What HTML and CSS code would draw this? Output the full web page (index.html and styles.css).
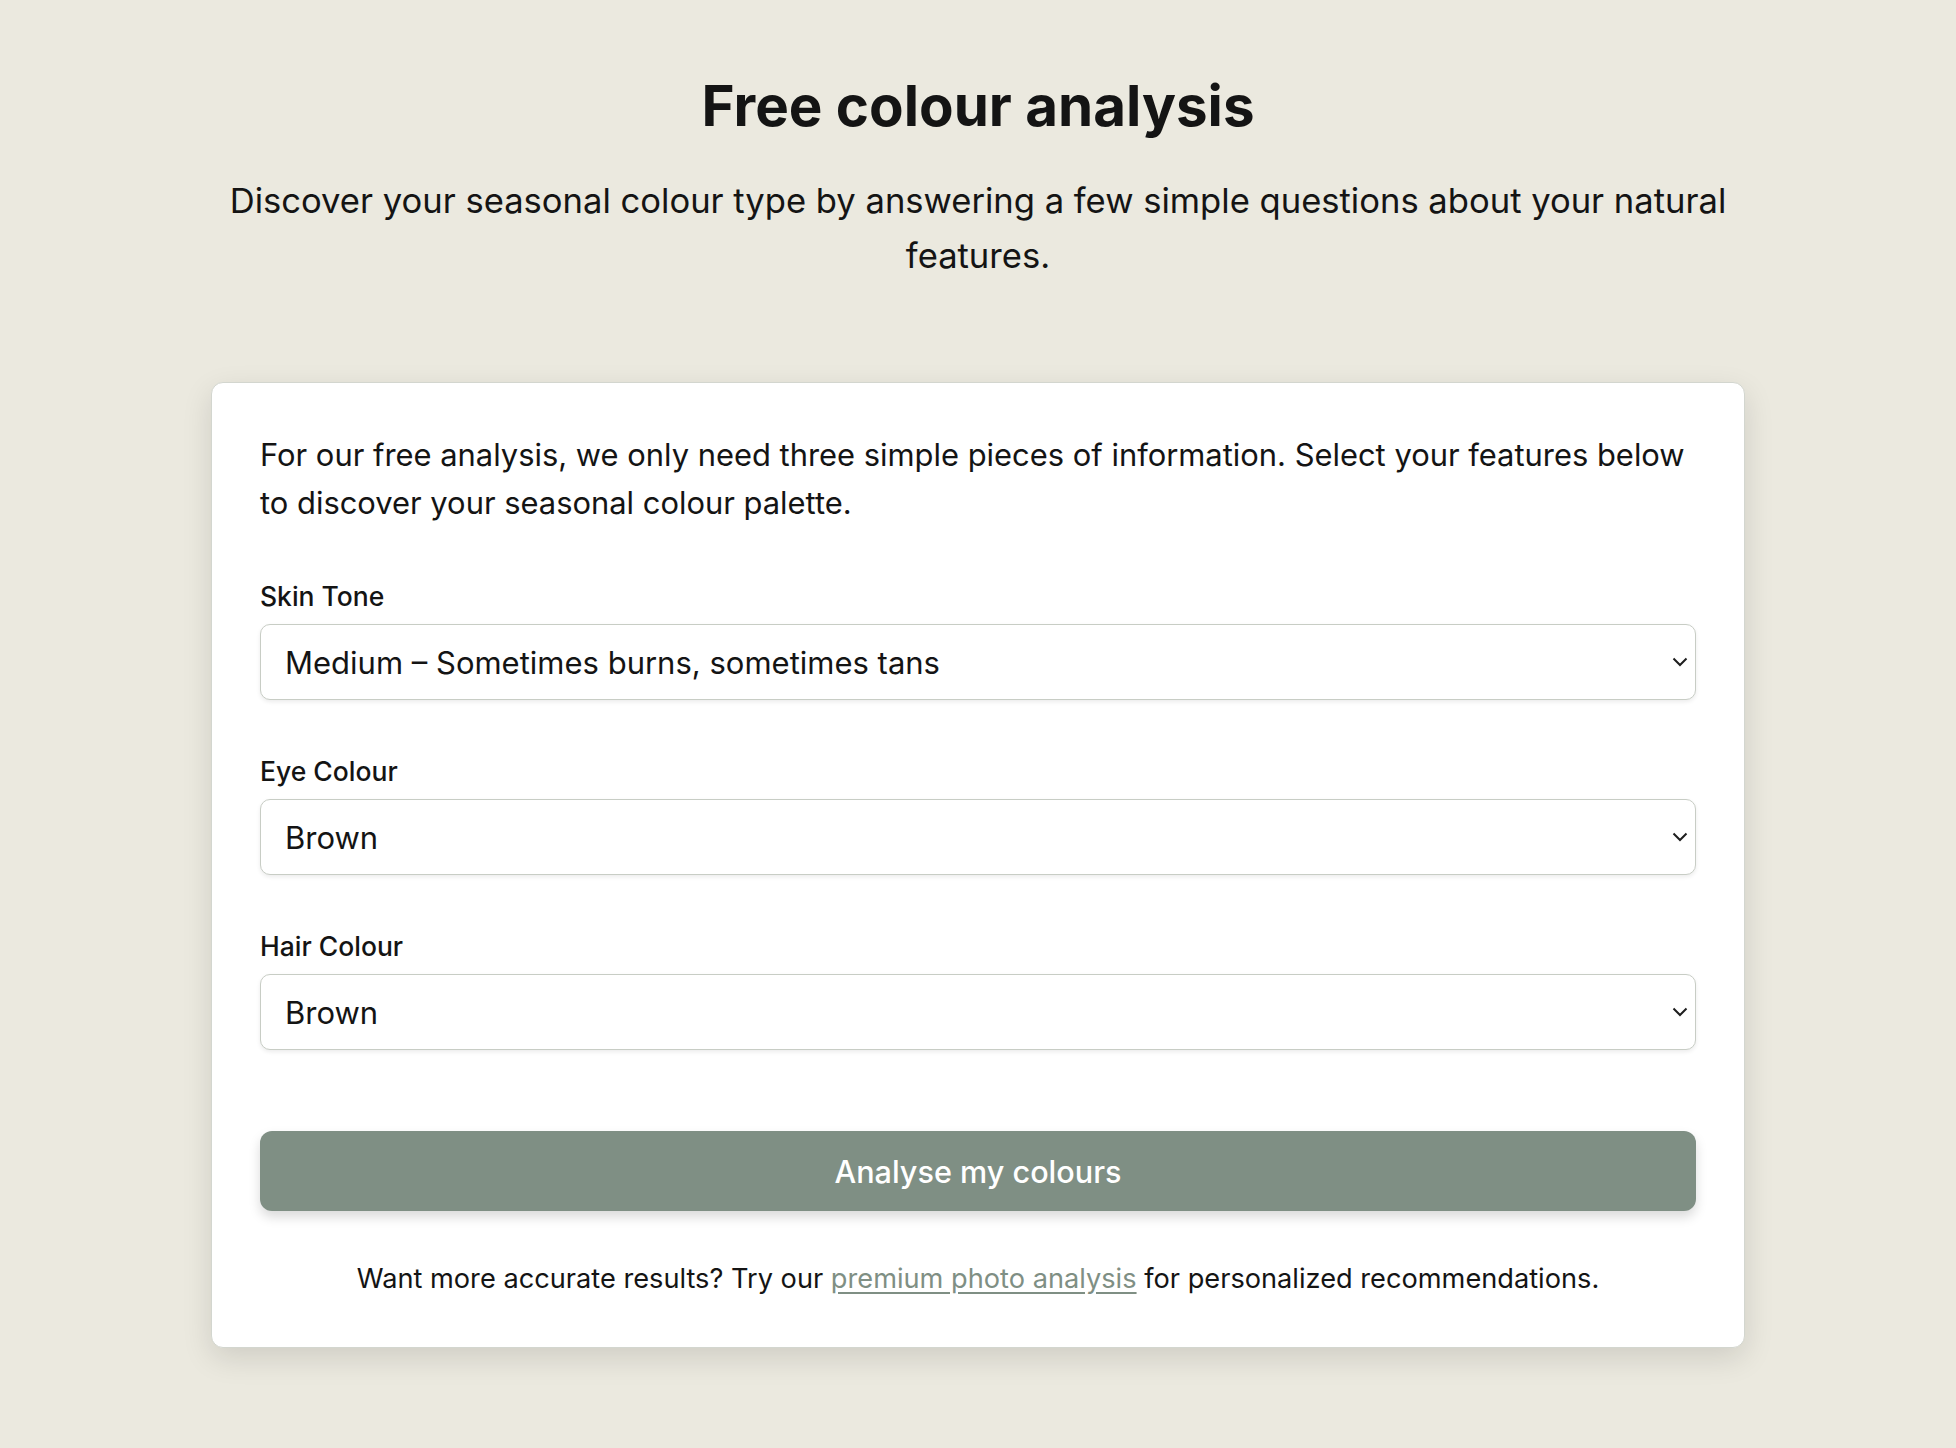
FILE: index.html
```html
<!DOCTYPE html>
<html lang="en">
<head>
<meta charset="utf-8">
<title>Free colour analysis</title>
<link rel="stylesheet" href="styles.css">
</head>
<body>
<main class="page">
  <h1 class="title">Free colour analysis</h1>
  <p class="subtitle">Discover your seasonal colour type by answering a few simple questions about your natural features.</p>
  <section class="card">
    <p class="intro">For our free analysis, we only need three simple pieces of information. Select your features below to discover your seasonal colour palette.</p>
    <div class="field">
      <label class="label" for="skin">Skin Tone</label>
      <div class="select-wrap">
        <select class="select" id="skin">
          <option>Medium – Sometimes burns, sometimes tans</option>
        </select>
        <svg class="chevron" width="16" height="10" viewBox="0 0 16 10"><path d="M1.5 1.5 L8 8 L14.5 1.5" fill="none" stroke="#1e1e1e" stroke-width="2"/></svg>
      </div>
    </div>
    <div class="field">
      <label class="label" for="eye">Eye Colour</label>
      <div class="select-wrap">
        <select class="select" id="eye">
          <option>Brown</option>
        </select>
        <svg class="chevron" width="16" height="10" viewBox="0 0 16 10"><path d="M1.5 1.5 L8 8 L14.5 1.5" fill="none" stroke="#1e1e1e" stroke-width="2"/></svg>
      </div>
    </div>
    <div class="field">
      <label class="label" for="hair">Hair Colour</label>
      <div class="select-wrap">
        <select class="select" id="hair">
          <option>Brown</option>
        </select>
        <svg class="chevron" width="16" height="10" viewBox="0 0 16 10"><path d="M1.5 1.5 L8 8 L14.5 1.5" fill="none" stroke="#1e1e1e" stroke-width="2"/></svg>
      </div>
    </div>
    <button class="button" type="button">Analyse my colours</button>
    <p class="footnote">Want more accurate results? Try our <a class="link" href="#">premium photo analysis</a> for personalized recommendations.</p>
  </section>
</main>
</body>
</html>
```
FILE: styles.css
```css
* { box-sizing: border-box; }
body {
  margin: 0;
  background: #ebe9df;
  color: #141414;
  font-family: "Inter", "Lato", sans-serif;
}
.page {
  display: flex;
  flex-direction: column;
  align-items: center;
  padding: 72px 0 72px;
}
.title {
  margin: 0;
  font-size: 56.5px;
  line-height: 67px;
  font-weight: 700;
  text-align: center;
}
.subtitle {
  margin: 34px 0 0;
  max-width: 1536px;
  font-size: 34.6px;
  line-height: 55px;
  text-align: center;
}
.card {
  width: 1534px;
  margin-top: 99px;
  padding: 48px;
  background: #fff;
  border: 1px solid #d3d6cf;
  border-radius: 12px;
  box-shadow: 0 10px 30px rgba(0, 0, 0, 0.12);
  display: flex;
  flex-direction: column;
}
.intro {
  margin: 0 0 51px;
  font-size: 30.9px;
  line-height: 48px;
}
.field {
  display: flex;
  flex-direction: column;
  gap: 10px;
  margin-bottom: 53px;
}
.field:last-of-type { margin-bottom: 81px; }
.label {
  font-size: 26.5px;
  line-height: 36px;
  font-weight: 500;
}
.select-wrap { position: relative; }
.select {
  width: 100%;
  height: 76px;
  padding: 0 24px;
  appearance: none;
  -webkit-appearance: none;
  background: #fff;
  border: 1px solid #c8cdc5;
  border-radius: 10px;
  box-shadow: 0 2px 4px rgba(0, 0, 0, 0.08);
  font-family: inherit;
  font-size: 31px;
  color: #141414;
}
.chevron {
  position: absolute;
  right: 8px;
  top: 33px;
}
.button {
  height: 80px;
  width: 100%;
  border: 0;
  border-radius: 12px;
  background: #7f8f84;
  color: #fff;
  font-family: inherit;
  font-size: 30.6px;
  font-weight: 500;
  box-shadow: 0 6px 12px rgba(0, 0, 0, 0.15);
}
.footnote {
  margin: 48px 0 0;
  text-align: center;
  font-size: 27.2px;
  line-height: 40px;
}
.link {
  color: #7f8f84;
  text-decoration: underline;
  text-underline-offset: 4px;
}
```
